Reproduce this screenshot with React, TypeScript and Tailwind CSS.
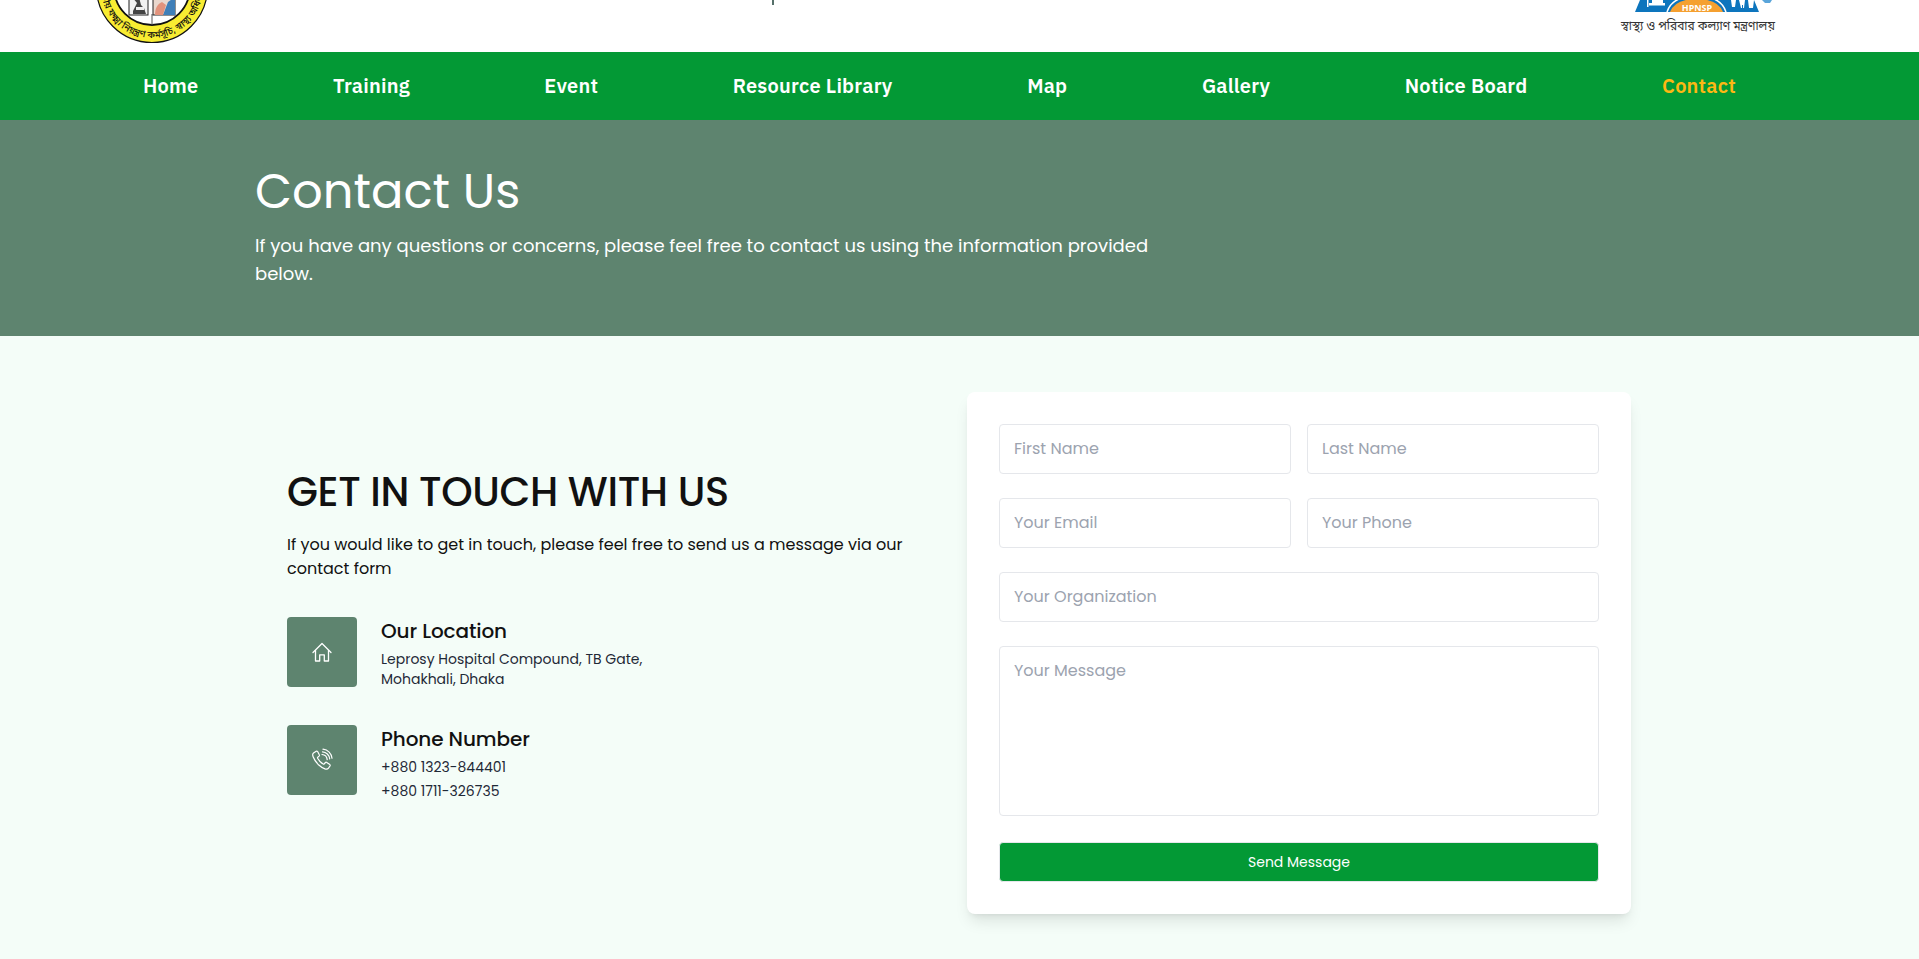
const font = "font-['Poppins','Inter','Liberation_Sans',sans-serif]";
const nav = ["Home", "Training", "Event", "Resource Library", "Map", "Gallery", "Notice Board", "Contact"];

function LeftLogo() {
  return (
    <svg width="114" height="46" viewBox="0 0 114 46" className="absolute left-[95px] bottom-[7px]">
      <circle cx="57" cy="-12" r="55.500" fill="#f8ec32" stroke="#111" strokeWidth="1.200" />
      <circle cx="57" cy="-12" r="38" fill="#fff" stroke="#111" strokeWidth="1.800" />
      <path d="M57 26V15" stroke="#555" />
      <rect x="34" y="-2" width="19" height="18" fill="#f1f1f1" stroke="#222" />
      <path d="M37 -2l5 6-4 8v3h13l-2-6-3-3-2-8z" fill="#444" />
      <path d="M41 8h8v3h-8z" fill="#eee" />
      <rect x="58" y="-2" width="22" height="18" fill="#e9d7cd" stroke="#222" />
      <path d="M68 16 73 3l7-5V16z" fill="#3f7fb8" />
      <path d="M60 16c0-6 2-11 7-13l4 3-3 10z" fill="#e2927c" />
      <defs>
        <path id="logoRing" d="M6 -12A51 51 0 0 0 108 -12" />
      </defs>
      <text fontSize="9.500" fontWeight="500" fill="#111" fontFamily="Noto Sans Bengali, Noto Sans, sans-serif" textAnchor="middle">
        <textPath href="#logoRing" startOffset="50%">জাতীয় যক্ষ্মা নিয়ন্ত্রণ কর্মসূচি, স্বাস্থ্য অধিদপ্তর</textPath>
      </text>
    </svg>
  );
}

function RightLogo() {
  return (
    <svg width="144" height="13" viewBox="0 0 144 13" className="absolute left-[1632px] top-0">
      <path d="M3 12L8 0H122L127 12z" fill="#0d75bd" />
      <path d="M38 12Q43 -1 64.500 -1Q86 -1 91 12z" fill="#f5a030" />
      <path d="M35 12Q40 -4 64.500 -4Q89 -4 94 12" fill="none" stroke="#fff" strokeWidth="1.500" />
      <text x="65" y="10.500" textAnchor="middle" fontSize="9" fontWeight="700" fill="#fff" fontFamily="Noto Sans">HPNSP</text>
      <path d="M15 0h1.500v7H15zM17 3h16v2.500H17zM20 0h11v3H20z" fill="#fff" />
      <path d="M99 0h5l-1 7h-3zM107 0h6l-1 8h-1v-3h-1v3h-1zM116 0h6l-1 8h-4z" fill="#fff" />
      <path d="M130 0h10l-2 3h-5z" fill="#5aa5da" />
    </svg>
  );
}

function HouseIcon() {
  return (
    <svg width="22" height="22" viewBox="0 0 22 22" fill="none" stroke="#fff" strokeWidth="1.300" strokeLinejoin="round" strokeLinecap="round">
      <path d="M2 11.500 11 2.500l9 9" />
      <path d="M4.500 9.500V20h4.200v-6.200h4.600V20h4.200V9.500" />
    </svg>
  );
}

function PhoneIcon() {
  return (
    <svg width="24" height="24" viewBox="0 0 24 24" fill="none" stroke="#fff" strokeWidth="1.200" strokeLinecap="round" strokeLinejoin="round">
      <path d="M6.200 3.200 3.500 5c-1 .8-1 2.200-.4 3.800 1.200 3 3 5.600 5.400 7.900 2.200 2 4.300 3.400 6.500 4.200 1.500.5 2.700.3 3.500-.7l1.500-2.200c.3-.5.200-1-.2-1.400l-3-2.200c-.5-.3-1-.3-1.400.1l-1.100 1.300c-.3.300-.7.400-1.100.2-2.400-1.300-4.300-3.300-5.600-5.700-.2-.4-.1-.8.200-1.100l1.300-1.100c.4-.4.500-.9.200-1.400L7.600 3.500c-.4-.5-.9-.6-1.400-.3z" />
      <path d="M12 6.500c2.700.2 4.900 2.400 5.200 5.100" />
      <path d="M12.500 3.800c3.800.3 6.800 3.300 7.200 7.100" />
      <path d="M13 1.200c4.800.4 8.600 4.200 9 9" />
    </svg>
  );
}

function Field({ placeholder, className = "" }: { placeholder: string; className?: string }) {
  return (
    <input
      placeholder={placeholder}
      className={`h-[50px] w-full rounded border border-[#e5e7eb] bg-white px-[14px] pb-[2px] text-base text-[#111] outline-none placeholder:text-[#9ca3af] ${font} ${className}`}
    />
  );
}

function Info({ icon, title, children }: { icon: React.ReactNode; title: string; children: React.ReactNode }) {
  return (
    <div className="flex gap-6">
      <div className="flex h-[70px] w-[70px] shrink-0 items-center justify-center rounded bg-[#5e846f]">{icon}</div>
      <div>
        <h3 className={`text-[20px] font-medium leading-[28px] tracking-[-0.1px] text-[#111] ${font}`}>{title}</h3>
        <div className={`text-sm text-[#1f2937] ${font}`}>{children}</div>
      </div>
    </div>
  );
}

export default function App() {
  return (
    <div className={`h-[959px] overflow-hidden bg-[#f4fdf8] ${font}`}>
      <header className="relative h-[52px] overflow-hidden bg-white">
        <LeftLogo />
        <div className="absolute left-[772px] top-0 h-[5px] w-[2px] bg-[#56706a]" />
        <RightLogo />
        <div className="absolute bottom-[17px] left-[1621px] whitespace-nowrap text-[12px] leading-[16px] text-[#333] font-['Noto_Sans_Bengali','Noto_Sans_CJK_SC','Noto_Sans',sans-serif]">স্বাস্থ্য ও পরিবার কল্যাণ মন্ত্রণালয়</div>
      </header>
      <nav className="flex h-[68px] items-center justify-between bg-[#039935] pl-[143px] pr-[183px]">
        {nav.map((n) => (
          <a key={n} className={`text-[20px] font-semibold tracking-[0.23px] font-['IBM_Plex_Sans','Inter','Noto_Sans',sans-serif] ${n === "Contact" ? "text-[#fdb813]" : "text-white"}`}>{n}</a>
        ))}
      </nav>
      <section className="flex h-[216px] flex-col justify-center bg-[#5e846f] pb-[5px] pl-[255px] text-white">
        <h1 className="text-[48px] leading-[56px]">Contact Us</h1>
        <p className="mt-[12px] w-[900px] text-[18px] leading-[28px]">If you have any questions or concerns, please feel free to contact us using the information provided below.</p>
      </section>
      <main className="flex pl-[287px] pt-14">
        <div className="w-[680px] pt-[72px]">
          <h2 className="text-[40px] font-medium leading-[56px] tracking-[-0.37px] text-[#111]">GET IN TOUCH WITH US</h2>
          <p className="mt-[13px] w-[630px] text-base leading-6 text-[#111]">If you would like to get in touch, please feel free to send us a message via our contact form</p>
          <div className="mt-[36px] flex flex-col gap-[38px]">
            <Info icon={<HouseIcon />} title="Our Location">
              <p className="mt-1 leading-5">Leprosy Hospital Compound, TB Gate,<br />Mohakhali, Dhaka</p>
            </Info>
            <div className="-mt-[2px]">
              <Info icon={<PhoneIcon />} title="Phone Number">
                <p className="mt-[2px] leading-6">+880 1323-844401<br />+880 1711-326735</p>
              </Info>
            </div>
          </div>
        </div>
        <form className="flex h-[522px] w-[664px] flex-col gap-[24px] rounded-lg bg-white p-8 shadow-[0_10px_15px_-3px_rgba(0,0,0,0.1),0_4px_6px_-4px_rgba(0,0,0,0.1)]">
          <div className="grid grid-cols-2 gap-4">
            <Field placeholder="First Name" />
            <Field placeholder="Last Name" />
          </div>
          <div className="grid grid-cols-2 gap-4">
            <Field placeholder="Your Email" />
            <Field placeholder="Your Phone" />
          </div>
          <Field placeholder="Your Organization" />
          <textarea
            placeholder="Your Message"
            className={`h-[170px] w-full resize-none rounded border border-[#e5e7eb] px-[14px] pb-[10px] pt-[12px] text-base outline-none placeholder:text-[#9ca3af] ${font}`}
          />
          <button type="button" className="mt-[2px] h-[40px] w-full rounded-sm border border-[#e5e7eb] bg-[#039935] text-sm text-white">Send Message</button>
        </form>
      </main>
    </div>
  );
}
